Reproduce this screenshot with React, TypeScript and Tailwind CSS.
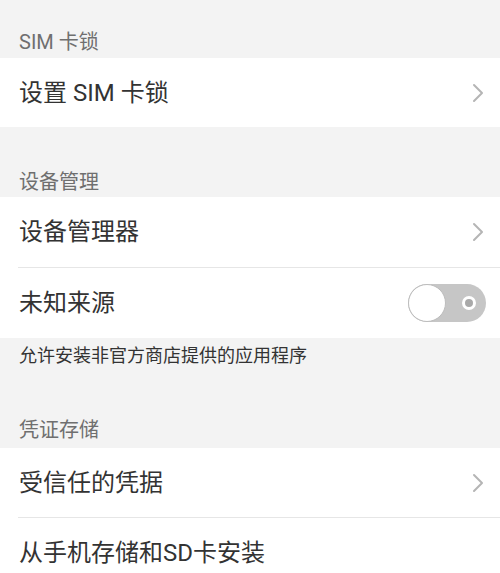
import React from 'react';

const font = { fontFamily: 'Roboto, "Noto Sans CJK SC", sans-serif' };

function Chevron() {
  return (
    <svg width="14" height="20" viewBox="0 0 14 20" fill="none" className="shrink-0">
      <path d="M3 2 L11 10 L3 18" stroke="#b5b5b5" strokeWidth="2" strokeLinecap="round" strokeLinejoin="round" />
    </svg>
  );
}

function Toggle() {
  return (
    <div className="relative w-[78px] h-[38px] rounded-full bg-[#c6c6c6] shrink-0">
      <div className="absolute left-0 top-0 w-[38px] h-[38px] rounded-full bg-white border border-[#bdbdbd]" />
      <div className="absolute left-[54px] top-[12px] w-[14px] h-[14px] rounded-full border-[3px] border-white bg-[#a9a9a9]" />
    </div>
  );
}

function Header({ title, h, pb }: { title: string; h: string; pb: string }) {
  return (
    <div className={`flex items-end px-[19px] ${h} ${pb}`}>
      <span className="text-[20px] leading-[24px] text-[#6f6f6f]">{title}</span>
    </div>
  );
}

function Row({ label, right, h = 'h-[69px]' }: { label: string; right?: React.ReactNode; h?: string }) {
  return (
    <div className={`flex items-center justify-between pl-[19px] pr-[15px] bg-white ${h}`}>
      <span className="text-[24px] leading-[30px] text-[#333333]">{label}</span>
      {right}
    </div>
  );
}

function Divider() {
  return (
    <div className="bg-white pl-[18px]">
      <div className="h-px bg-[#e6e6e6]" />
    </div>
  );
}

export default function App() {
  return (
    <div className="w-[500px] h-[573px] overflow-hidden bg-[#f3f3f3]" style={font}>
      <Header title="SIM 卡锁" h="h-[58px]" pb="pb-[4px]" />
      <Row label="设置 SIM 卡锁" right={<Chevron />} />

      <Header title="设备管理" h="h-[70px]" pb="pb-[3px]" />
      <Row label="设备管理器" right={<Chevron />} h="h-[70px]" />
      <Divider />
      <div className="flex items-center justify-between pl-[19px] pr-[14px] bg-white h-[70px]">
        <span className="text-[24px] leading-[30px] text-[#333333]">未知来源</span>
        <Toggle />
      </div>
      <div className="px-[19px] pt-[6px]">
        <span className="text-[18px] leading-[24px] text-[#333333]">允许安装非官方商店提供的应用程序</span>
      </div>

      <Header title="凭证存储" h="h-[79px]" pb="pb-[6px]" />
      <Row label="受信任的凭据" right={<Chevron />} />
      <Divider />
      <Row label="从手机存储和SD卡安装" />
    </div>
  );
}
